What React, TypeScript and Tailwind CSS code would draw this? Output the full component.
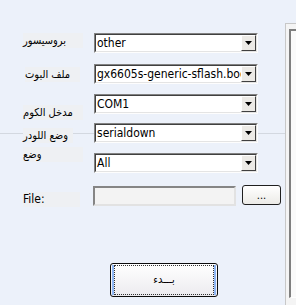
import React from 'react';

const rows = [
  { label: 'بروسيسور', value: 'other', gap: 'mt-[33px]', lbl: 'mt-0 w-[60px]' },
  { label: 'ملف البوت', value: 'gx6605s-generic-sflash.boot', gap: 'mt-[11px]', lbl: 'mt-[3px] w-[55px] ml-[2px]' },
  { label: 'مدخل الكوم', value: 'COM1', gap: 'mt-[10px]', lbl: 'mt-[11px] w-[60px]' },
  { label: 'وضع اللودر', value: 'serialdown', gap: 'mt-[9px]', lbl: 'mt-[5px] w-[50px]' },
  { label: 'وضع', value: 'All', gap: 'mt-[10px]', lbl: 'mt-[-6px] w-[60px]' },
];

function Combo({ value }: { value: string }) {
  return (
    <div className="flex h-[20px] w-[164px] border border-t-[#828282] border-l-[#828282] border-b-[#fdfdfd] border-r-[#fdfdfd]">
      <div className="flex flex-1 min-w-0 border border-t-[#404040] border-l-[#404040] border-b-[#e4e4e4] border-r-[#e4e4e4] bg-white">
        <div className="flex-1 min-w-0 overflow-hidden whitespace-nowrap pl-[1px] text-[12px] leading-[16px] text-black">
          {value}
        </div>
        <div className="flex w-[15px] items-center justify-center border border-t-[#ffffff] border-l-[#ffffff] border-b-[#404040] border-r-[#404040] bg-[#eceae6]">
          <svg width="7" height="4" viewBox="0 0 7 4">
            <path d="M0 0h7L3.5 4z" fill="#000" />
          </svg>
        </div>
      </div>
    </div>
  );
}

export default function App() {
  return (
    <div className="flex h-[305px] w-[296px] overflow-hidden bg-[#ecf1fa] font-['DejaVu_Sans_Condensed','DejaVu_Sans',sans-serif] text-black">
      <div className="relative w-[285px] shrink-0">
        {/* group separator behind the rows */}
        <div className="absolute left-0 right-0 top-[133px] h-px bg-[#d3d8e0]" />

        <div className="relative flex flex-col">
          {rows.map((r) => (
            <div key={r.label} className={`flex h-[20px] items-start pl-[23px] ${r.gap}`}>
              <div className="h-[20px] w-[71px]">
                <div className={`${r.lbl} h-[15px] bg-[#eef0f3] text-[11px] leading-[15px] whitespace-nowrap`}>
                  {r.label}
                </div>
              </div>
              <Combo value={r.value} />
            </div>
          ))}

          <div className="mt-[12px] flex h-[20px] items-start pl-[23px]">
            <div className="h-[20px] w-[70px]">
              <div className="mt-[7px] h-[15px] w-[57px] bg-[#eef0f3] text-[12px] leading-[15px]">File:</div>
            </div>
            <div className="mt-[1px] h-[20px] w-[143px] border-2 border-t-[#858585] border-l-[#858585] border-b-[#e2e2e2] border-r-[#e2e2e2] bg-[#f3f3f3]" />
            <button className="ml-[6px] flex h-[20px] w-[39px] items-center justify-center rounded-[3px] border border-[#1f1f1f] bg-gradient-to-b from-[#ffffff] to-[#ecebe7] pt-[2px] text-[11px] leading-[14px]">
              ...
            </button>
          </div>

          <button className="ml-[110px] mt-[58px] flex h-[34px] w-[108px] items-center justify-center rounded-[3px] border border-[#0a0a0a] bg-gradient-to-b from-[#ffffff] to-[#ecebef] p-[1px]">
            <span className="flex h-full w-full items-center justify-center border-l-2 border-r-2 border-[#8fb7f5]">
              <span className="flex h-full w-full items-center justify-center border border-dotted border-[#333]">
                <span className="text-[11px]">بـــدء</span>
              </span>
            </span>
          </button>
        </div>
      </div>

      <div className="mt-[23px] flex-1 border-l border-t border-[#c8c8c8] bg-[#f4f4f4] pl-[3px] pt-[5px] pb-[7px]">
        <div className="h-full border-l-2 border-t-2 border-b border-l-[#7f7f7f] border-t-[#7f7f7f] border-b-[#ffffff] bg-[#fafafa]" />
      </div>
    </div>
  );
}
